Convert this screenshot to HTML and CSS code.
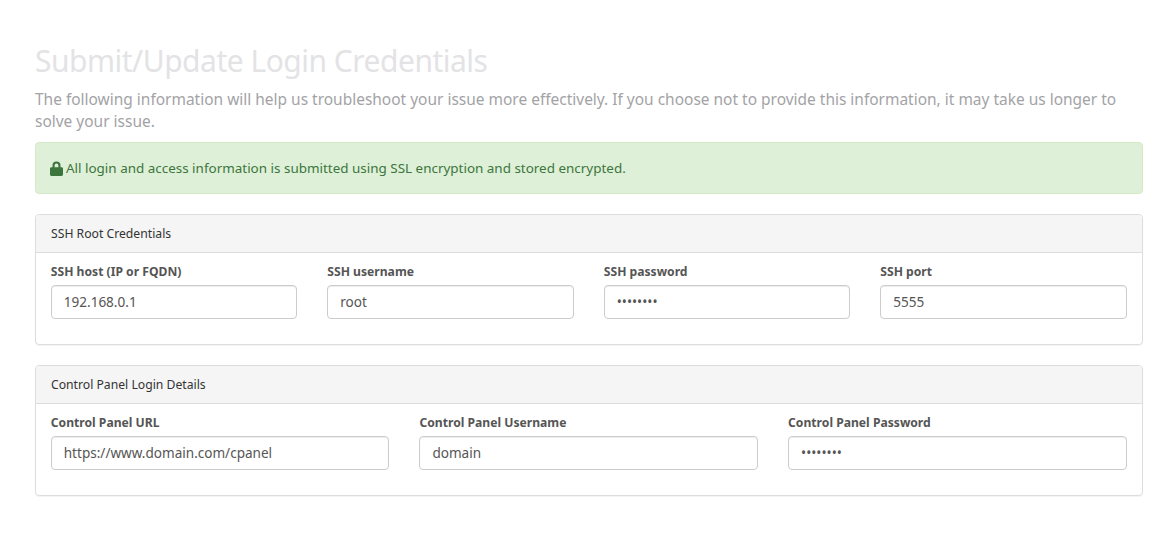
FILE: index.html
```html
<!DOCTYPE html>
<html lang="en">
<head>
<meta charset="utf-8">
<title>Submit/Update Login Credentials</title>
<link rel="stylesheet" href="styles.css">
</head>
<body>
<main class="page">
  <h1 class="title">Submit/Update Login Credentials</h1>
  <p class="intro">The following information will help us troubleshoot your issue more effectively. If you choose not to provide this information, it may take us longer to solve your issue.</p>
  <div class="alert">
    <svg class="lock" viewBox="0 0 13 15" aria-hidden="true"><path fill="#3c763d" fill-rule="evenodd" d="M2.500 6.300V4.400a4 4 0 0 1 8 0v1.900h1.100c.8 0 1.400.6 1.400 1.400v5.900c0 .8-.6 1.400-1.400 1.400H1.400C.6 15 0 14.400 0 13.600V7.700c0-.8.6-1.400 1.400-1.400zm2.100 0h3.800V4.400a1.900 1.900 0 0 0-3.800 0z"/></svg>
    <span>All login and access information is submitted using SSL encryption and stored encrypted.</span>
  </div>
  <section class="panel">
    <div class="panel-head">SSH Root Credentials</div>
    <div class="panel-body cols-4">
      <div class="field"><label>SSH host (IP or FQDN)</label><input type="text" value="192.168.0.1"></div>
      <div class="field"><label>SSH username</label><input type="text" value="root"></div>
      <div class="field"><label>SSH password</label><input type="password" value="password"></div>
      <div class="field"><label>SSH port</label><input type="text" value="5555"></div>
    </div>
  </section>
  <section class="panel">
    <div class="panel-head">Control Panel Login Details</div>
    <div class="panel-body cols-3">
      <div class="field"><label>Control Panel URL</label><input type="text" value="https://www.domain.com/cpanel"></div>
      <div class="field"><label>Control Panel Username</label><input type="text" value="domain"></div>
      <div class="field"><label>Control Panel Password</label><input type="password" value="password"></div>
    </div>
  </section>
</main>
</body>
</html>
```
FILE: styles.css
```css
* { box-sizing: border-box; }
html, body { margin: 0; background: #fff; }
body { font-family: "Noto Sans", "Open Sans", sans-serif; color: #555; overflow: hidden; }
.page { padding: 41px 27px 0 35px; height: 540px; }
.title { margin: 0; font-size: 30px; line-height: 40px; font-weight: 400; letter-spacing: -0.5px; color: #e3e3e5; }
.intro { margin: 7px 0 10px; font-size: 15.47px; line-height: 22px; color: #a3a3a6; }
.alert { display: flex; align-items: center; gap: 3px; height: 52px; padding: 0 14px; margin-bottom: 20px; background: #dff0d8; border: 1px solid #d6e9c6; border-radius: 4px; color: #3c763d; font-size: 13.44px; }
.lock { width: 13px; height: 15px; flex: none; }
.panel { height: 131px; margin-bottom: 20px; border: 1px solid #ddd; border-radius: 4px; box-shadow: 0 1px 1px rgba(0,0,0,.05); overflow: hidden; }
.panel-head { height: 38px; padding: 0 15px; display: flex; align-items: center; background: #f5f5f5; border-bottom: 1px solid #ddd; color: #333; font-size: 12.2px; }
.panel-body { display: grid; gap: 30px; padding: 9px 15.25px 0 14.75px; }
.cols-4 { grid-template-columns: repeat(4, 1fr); }
.cols-3 { grid-template-columns: repeat(3, 1fr); }
.field { display: flex; flex-direction: column; min-width: 0; }
.field label { font-size: 12.15px; line-height: 20px; font-weight: 700; color: #555; margin-bottom: 3px; }
.field input { width: 100%; height: 34px; padding: 6px 12px; border: 1px solid #ccc; border-radius: 4px; background: #fff; color: #555; font: 13.55px "Noto Sans", "Open Sans", sans-serif; box-shadow: inset 0 1px 1px rgba(0,0,0,.075); outline: 0; }
```
